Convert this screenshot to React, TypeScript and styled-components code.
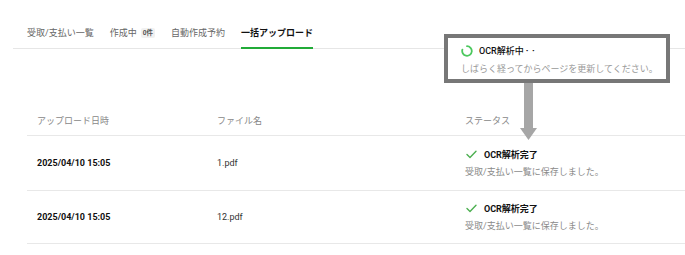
import { FC } from "react";
import styled, { createGlobalStyle } from "styled-components";

const GlobalStyle = createGlobalStyle`
  html, body {
    margin: 0;
    padding: 0;
    background: #fff;
  }
  body {
    font-family: Roboto, "Noto Sans CJK JP", sans-serif;
    color: #222;
  }
`;

type Upload = {
  date: string;
  file: string;
};

const uploads: Upload[] = [
  { date: "2025/04/10 15:05", file: "1.pdf" },
  { date: "2025/04/10 15:05", file: "12.pdf" },
];

const tabs = [
  { label: "受取/支払い一覧" },
  { label: "作成中", badge: "0件" },
  { label: "自動作成予約" },
  { label: "一括アップロード", active: true },
];

const Spinner: FC = () => (
  <svg width="12" height="12" viewBox="0 0 12 12">
    <path
      d="M6 1.2 A4.8 4.8 0 1 1 1.4 4.6"
      fill="none"
      stroke="#4cc85e"
      strokeWidth="1.8"
      strokeLinecap="round"
    />
  </svg>
);

const Check: FC = () => (
  <svg width="11" height="9" viewBox="0 0 11 9">
    <path
      d="M1 4.6 L4 7.4 L10 1.2"
      fill="none"
      stroke="#4caf50"
      strokeWidth="1.4"
      strokeLinecap="round"
      strokeLinejoin="round"
    />
  </svg>
);

const App: FC = () => {
  return (
    <Page>
      <GlobalStyle />
      <TabBar>
        {tabs.map((t) => (
          <Tab key={t.label} $active={!!t.active}>
            {t.label}
            {t.badge && <Badge>{t.badge}</Badge>}
          </Tab>
        ))}
      </TabBar>

      <Table>
        <HeadRow>
          <HeadCell>アップロード日時</HeadCell>
          <HeadCell>ファイル名</HeadCell>
          <HeadCell>ステータス</HeadCell>
        </HeadRow>
        {uploads.map((u, i) => (
          <BodyRow key={u.file} $last={i === uploads.length - 1}>
            <DateCell>{u.date}</DateCell>
            <Cell>{u.file}</Cell>
            <Cell>
              <Status>
                <StatusTitle>
                  <Check />
                  OCR解析完了
                </StatusTitle>
                <StatusNote>受取/支払い一覧に保存しました。</StatusNote>
              </Status>
            </Cell>
          </BodyRow>
        ))}
      </Table>

      <Callout>
        <CalloutTitle>
          <Spinner />
          <span>
            OCR解析中<Dots>··</Dots>
          </span>
        </CalloutTitle>
        <CalloutNote>しばらく経ってからページを更新してください。</CalloutNote>
      </Callout>
      <Arrow width="18" height="57" viewBox="0 0 18 57">
        <rect x="5" y="0" width="9" height="46" fill="#a6a6a6" />
        <polygon points="1,45 18,45 9.5,57" fill="#a6a6a6" />
      </Arrow>
    </Page>
  );
};
export default App;

const Page = styled.div`
  position: relative;
  width: 685px;
  height: 255px;
  overflow: hidden;
`;

const TabBar = styled.div`
  display: flex;
  gap: 16px;
  margin-left: 13px;
  padding: 26px 0 0 14px;
  border-bottom: 1px solid #e6e6e6;
`;

const Tab = styled.div<{ $active: boolean }>`
  display: flex;
  align-items: center;
  height: 14px;
  padding-bottom: 7px;
  margin-bottom: -1px;
  font-size: 9px;
  line-height: 14px;
  white-space: nowrap;
  color: ${({ $active }) => ($active ? "#111" : "#666")};
  font-weight: ${({ $active }) => ($active ? 700 : 400)};
  border-bottom: 2px solid
    ${({ $active }) => ($active ? "#21ab38" : "transparent")};
`;

const Badge = styled.span`
  margin-left: 4px;
  padding: 0 2px;
  font-size: 6.5px;
  line-height: 10px;
  font-weight: 700;
  color: #555;
  background: #f1f1f1;
  border-radius: 2px;
`;

const Table = styled.div`
  margin: 58px 0 0 27px;
  font-size: 9px;
`;

const Row = styled.div`
  display: grid;
  grid-template-columns: 180px 248px 1fr;
  align-items: center;
  border-bottom: 1px solid #e8e8e8;
  box-sizing: border-box;
`;

const HeadRow = styled(Row)`
  height: 29px;
`;

const BodyRow = styled(Row)<{ $last: boolean }>`
  height: ${({ $last }) => ($last ? "53px" : "55px")};
`;

const Cell = styled.div`
  padding-left: 10px;
  line-height: 14px;
  color: #333;
`;

const HeadCell = styled(Cell)`
  color: #888;
`;

const DateCell = styled(Cell)`
  font-weight: 700;
  color: #111;
`;

const Status = styled.div`
  display: flex;
  flex-direction: column;
  gap: 3px;
`;

const StatusTitle = styled.div`
  display: flex;
  align-items: center;
  gap: 7px;
  padding-left: 1px;
  font-weight: 700;
  color: #111;
`;

const StatusNote = styled.div`
  color: #8a8a8a;
`;

const Callout = styled.div`
  position: absolute;
  left: 444px;
  top: 34px;
  width: 226px;
  height: 49px;
  box-sizing: border-box;
  border: 4px solid #777;
  background: #fff;
  padding: 6px 0 0 13px;
  font-size: 9px;
  display: flex;
  flex-direction: column;
  gap: 4px;
`;

const CalloutTitle = styled.div`
  display: flex;
  align-items: center;
  gap: 6px;
  line-height: 14px;
  font-weight: 500;
  color: #111;
`;

const Dots = styled.span`
  margin-left: 2px;
  letter-spacing: 3.5px;
  font-weight: 700;
`;

const CalloutNote = styled.div`
  line-height: 14px;
  color: #999;
  white-space: nowrap;
`;

const Arrow = styled.svg`
  position: absolute;
  left: 519px;
  top: 83px;
`;
